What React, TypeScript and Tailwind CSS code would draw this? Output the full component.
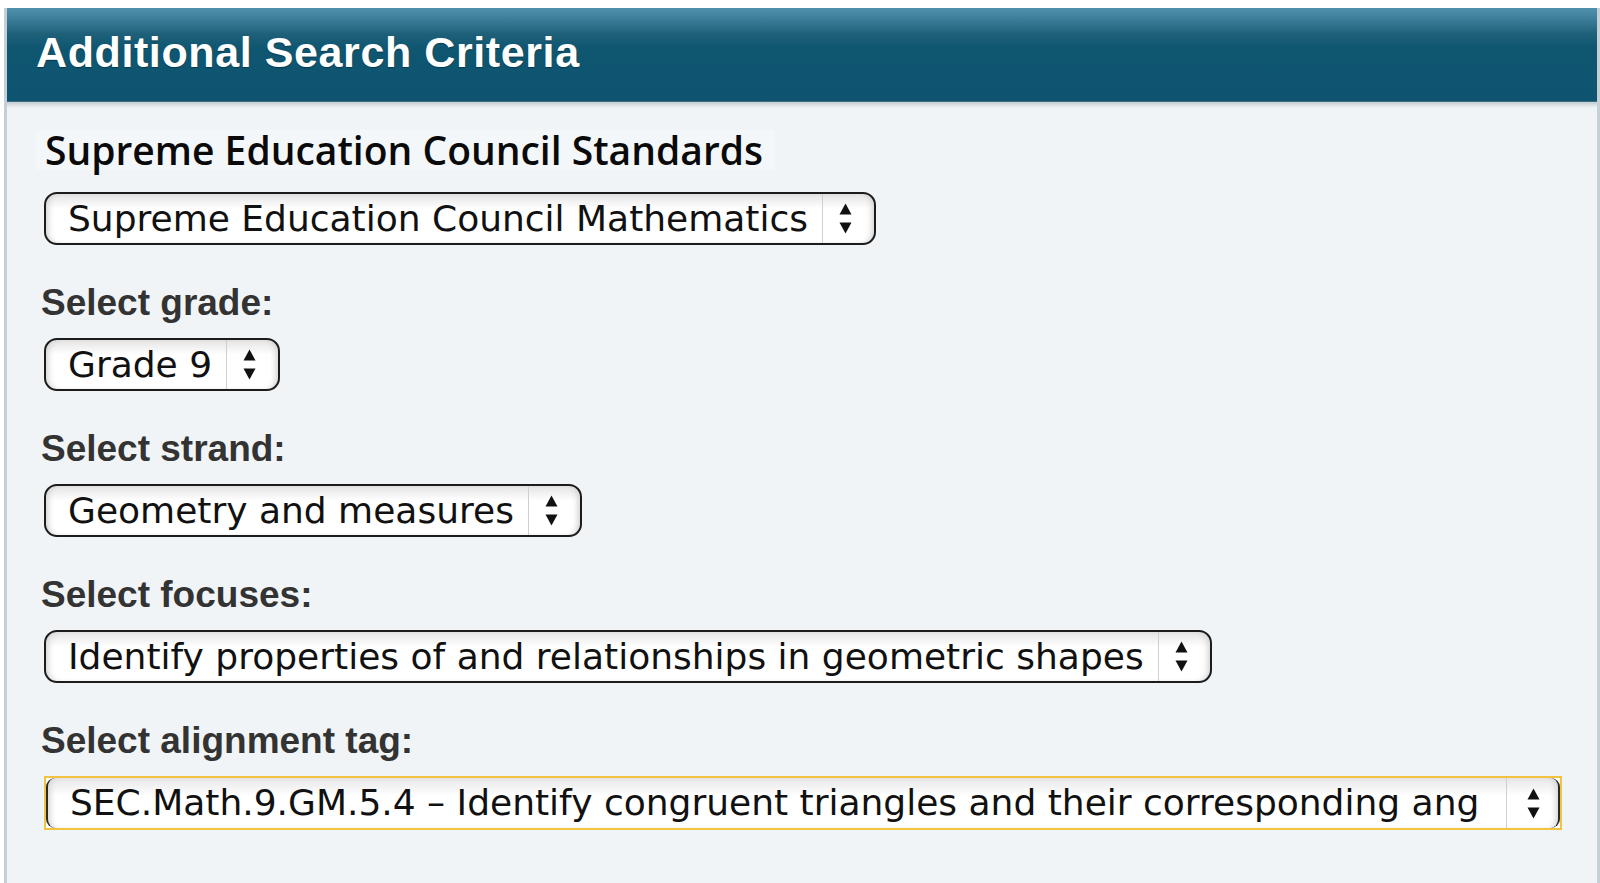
import React from "react";

type Field = { label: string; value: string; width?: number; focused?: boolean };

const FIELDS: Field[] = [
  { label: "Select grade:", value: "Grade 9" },
  { label: "Select strand:", value: "Geometry and measures" },
  { label: "Select focuses:", value: "Identify properties of and relationships in geometric shapes" },
  {
    label: "Select alignment tag:",
    value: "SEC.Math.9.GM.5.4 – Identify congruent triangles and their corresponding ang",
    width: 1518,
    focused: true,
  },
];

function Arrows() {
  return (
    <svg width="13" height="31" viewBox="0 0 13 31" className="shrink-0">
      <polygon points="0.5,11.5 6.5,0.5 12.5,11.5" fill="#111" />
      <polygon points="0.5,19.5 6.5,30.5 12.5,19.5" fill="#111" />
    </svg>
  );
}

function Select({ value, width, focused }: { value: string; width?: number; focused?: boolean }) {
  if (focused) {
    return (
      <div className="flex h-[54px] border-[2px] border-[#f2c33e] bg-white" style={{ width }}>
        <div className="flex flex-1 items-center justify-between rounded-[9px] border-x-2 border-[#2a2a2a] bg-[linear-gradient(to_bottom,#e6e6e6,#ffffff_35%,#ffffff)] shadow-[inset_6px_0_6px_-4px_#d2d2d2,inset_-6px_0_6px_-4px_#d2d2d2]">
          <div className="whitespace-nowrap pl-[22px] pr-[10px] font-['DejaVu_Sans',sans-serif] text-[36px] leading-none text-[#111]">
            {value}
          </div>
          <div className="flex h-full w-[52px] shrink-0 items-center border-l border-[#cfcfcf] pl-[20px]">
            <Arrows />
          </div>
        </div>
      </div>
    );
  }
  return (
    <div className="inline-flex h-[53px] items-center rounded-[13px] border-2 border-[#1c1c1c] bg-[linear-gradient(to_bottom,#e4e4e4,#ffffff_30%,#ffffff)] shadow-[inset_6px_0_6px_-4px_#cfcfcf,inset_-6px_0_6px_-4px_#cfcfcf]">
      <div className="whitespace-nowrap pl-[22px] pr-[14px] font-['DejaVu_Sans',sans-serif] text-[36px] leading-none text-[#111]">
        {value}
      </div>
      <div className="flex h-full w-[52px] items-center border-l border-[#cfcfcf] pl-[16px]">
        <Arrows />
      </div>
    </div>
  );
}

export default function App() {
  return (
    <div className="h-[883px] w-[1600px] overflow-hidden bg-white pt-2 pl-1">
      <div className="flex h-[875px] flex-col border-x-[3px] border-[#c5cfd6] bg-[#f1f4f6]">
        <div className="flex h-[94px] shrink-0 items-center border-b border-[#3f6c80] bg-[linear-gradient(to_bottom,#5191ad_0px,#3e7f9c_10px,#1f6079_26px,#0f5671_40px,#0e5470_100%)] pb-[4px] pl-[29px]">
          <h1 className="font-['Liberation_Sans',Arial,sans-serif] text-[43px] font-bold leading-none tracking-[0.6px] text-white [text-shadow:0_1px_1px_rgba(0,0,0,0.35)]">
            Additional Search Criteria
          </h1>
        </div>
        <div className="h-[6px] shrink-0 bg-[linear-gradient(to_bottom,#c3ccd2,#f1f4f6)]" />

        <div className="flex flex-col pl-[37px]">
          <div className="-ml-[8px] mt-[22px] self-start bg-[#f4f7f9] pl-[9px] pr-[12px]">
            <h2 className="font-['Open_Sans',sans-serif] text-[39px] font-semibold leading-[40px] text-[#0a0a0a]">
              Supreme Education Council Standards
            </h2>
          </div>
          <div className="mt-[22px]">
            <Select value="Supreme Education Council Mathematics" />
          </div>

          {FIELDS.map((f) => (
            <div key={f.label} className="mt-[38px] flex flex-col items-start">
              <label className="-ml-[3px] font-['Liberation_Sans',Arial,sans-serif] text-[37px] font-bold leading-[40px] text-[#333]">
                {f.label}
              </label>
              <div className="mt-[15px]">
                <Select value={f.value} width={f.width} focused={f.focused} />
              </div>
            </div>
          ))}
        </div>
      </div>
    </div>
  );
}
